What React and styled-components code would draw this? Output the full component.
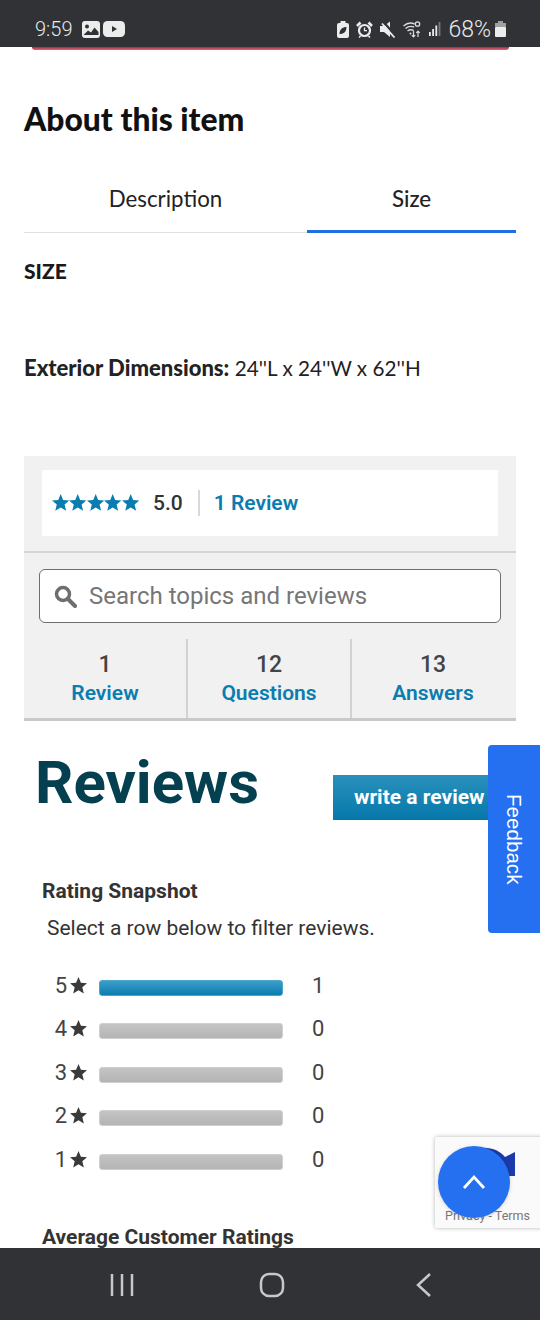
import styled, { createGlobalStyle } from 'styled-components';

const Global = createGlobalStyle`
  html, body {
    margin: 0;
    padding: 0;
    background: #fff;
  }
`;

const Phone = styled.div`
  position: relative;
  width: 540px;
  height: 1320px;
  overflow: hidden;
  display: flex;
  flex-direction: column;
  font-family: Roboto, "Liberation Sans", sans-serif;
  color: #333;
`;

const StatusBar = styled.div`
  height: 47px;
  flex: none;
  background: #303236;
  color: #e8e8e8;
  display: flex;
  align-items: center;
  justify-content: space-between;
  padding: 11px 34px 0 35px;
  box-sizing: border-box;
  font-size: 20px;
  font-weight: 300;
`;

const StatusGroup = styled.div`
  display: flex;
  align-items: center;
  gap: ${(p) => p.$gap || 6}px;
`;

const Percent = styled.span`
  font-size: 23px;
`;

const Main = styled.div`
  flex: 1;
  min-height: 0;
  overflow: hidden;
  background: #fff;
`;

const RedBar = styled.div`
  height: 3px;
  margin: 0 31px 0 32px;
  background: linear-gradient(#a82a3e, #dc6a7e);
  border-radius: 0 0 4px 4px;
`;

const Section = styled.div`
  padding: 0 24px;
`;

const Title = styled.h2`
  margin: 50px 0 0;
  font-family: Lato, sans-serif;
  font-weight: 900;
  font-size: 31.8px;
  line-height: 38px;
  color: #111;
`;

const Tabs = styled.div`
  display: grid;
  grid-template-columns: 283px 209px;
  margin-top: 42px;
  border-bottom: 1px solid #e0e0e0;
`;

const Tab = styled.div`
  height: 53px;
  box-sizing: border-box;
  padding-bottom: 14px;
  display: flex;
  align-items: center;
  justify-content: center;
  font-family: Lato, sans-serif;
  font-size: 22.3px;
  font-weight: ${(p) => (p.$active ? 500 : 400)};
  color: #222;
  margin-bottom: -1px;
  border-bottom: 3px solid ${(p) => (p.$active ? '#1f6fe0' : 'transparent')};
`;

const SizeLabel = styled.div`
  margin-top: 26px;
  font-family: Lato, sans-serif;
  font-weight: 900;
  font-size: 21px;
  line-height: 24px;
  color: #1a1a1a;
`;

const Dimensions = styled.div`
  margin-top: 73px;
  font-family: Lato, sans-serif;
  font-size: 20.7px;
  line-height: 24px;
  color: #222;

  b {
    font-size: 22px;
    font-weight: 900;
  }
`;

const ReviewPanel = styled.div`
  margin: 76px 24px 0;
  background: #f1f1f1;
  border-bottom: 3px solid #c9c9c9;
`;

const SummaryWrap = styled.div`
  padding: 14px 18px 15px;
  border-bottom: 2px solid #d5d5d5;
`;

const Summary = styled.div`
  height: 66px;
  background: #fff;
  display: flex;
  align-items: center;
  padding-left: 10px;
`;

const Stars = styled.span`
  display: flex;
`;

const Score = styled.span`
  font-size: 21px;
  font-weight: 500;
  margin-left: 14px;
  color: #333;
`;

const Divider = styled.span`
  width: 2px;
  height: 26px;
  background: #d8d8d8;
  margin: 0 14px 0 15px;
`;

const SummaryLink = styled.span`
  font-size: 21px;
  font-weight: 600;
  color: #0a7db0;
`;

const SearchBox = styled.div`
  margin: 16px 15px 0;
  height: 54px;
  box-sizing: border-box;
  background: #fff;
  border: 1.5px solid #6e6e6e;
  border-radius: 6px;
  display: flex;
  align-items: center;
  gap: 12px;
  padding-left: 13px;
  font-size: 24px;
  color: #767676;
`;

const Counts = styled.div`
  display: grid;
  grid-template-columns: 162px 164px 164px;
  margin-top: 16px;
`;

const Count = styled.div`
  height: 79px;
  box-sizing: border-box;
  text-align: center;
  padding-top: 12px;
  border-left: ${(p) => (p.$first ? 'none' : '2px solid #d2d2d2')};
`;

const CountNumber = styled.div`
  font-size: 23px;
  font-weight: 500;
  line-height: 28px;
  color: #444;
`;

const CountLabel = styled.div`
  font-size: 21px;
  font-weight: 600;
  line-height: 28px;
  color: #0a7db0;
`;

const ReviewsHead = styled.div`
  display: flex;
  align-items: center;
  justify-content: space-between;
  margin: 25px 0 0 35px;
  height: 74px;
`;

const ReviewsTitle = styled.h1`
  margin: 0;
  font-size: 60px;
  font-weight: 700;
  line-height: 74px;
  color: #04404f;
`;

const WriteButton = styled.div`
  width: 207px;
  height: 45px;
  display: flex;
  align-items: center;
  padding-left: 21px;
  box-sizing: border-box;
  margin-top: 28px;
  font-size: 21px;
  font-weight: 700;
  color: #fff;
  background: linear-gradient(#2a90bb, #0578ab);
`;

const Snapshot = styled.div`
  padding: 0 0 0 42px;
  margin-top: 58px;
`;

const SubHead = styled.div`
  font-size: 21px;
  font-weight: 700;
  line-height: 26px;
  color: #333;
  margin-top: ${(p) => p.$top || 0}px;
`;

const Hint = styled.div`
  margin: 11px 0 0 5px;
  font-size: 21px;
  line-height: 26px;
  color: #333;
`;

const Bars = styled.div`
  margin-top: 29px;
  display: flex;
  flex-direction: column;
  gap: 13.6px;
`;

const BarRow = styled.div`
  display: flex;
  align-items: center;
  height: 30px;
  font-size: 22px;
  color: #444;
`;

const BarStar = styled.div`
  width: 45px;
  display: flex;
  align-items: center;
  justify-content: flex-end;
  gap: 3px;
`;

const Bar = styled.div`
  width: 184px;
  height: 16px;
  box-sizing: border-box;
  margin: 5px 0 0 12px;
  border-radius: 3px;
  border: 1px solid ${(p) => (p.$filled ? '#4ba5cc' : '#cfcfcf')};
  background: ${(p) =>
    p.$filled
      ? 'linear-gradient(#3d9ec9, #0a7db0)'
      : 'linear-gradient(#c4c4c4, #b4b4b4)'};
`;

const BarCount = styled.div`
  margin-left: 29px;
`;

const NavBar = styled.div`
  height: 72px;
  flex: none;
  box-sizing: border-box;
  padding-top: 2px;
  background: #303236;
  display: grid;
  grid-template-columns: 243px 57px 240px;
  align-items: center;
  color: #c8c8c8;
`;

const NavItem = styled.div`
  display: flex;
  justify-content: ${(p) => p.$justify || 'center'};
  padding: ${(p) => p.$pad || '0'};
`;

const Feedback = styled.div`
  position: absolute;
  right: 0;
  top: 745px;
  width: 52px;
  height: 188px;
  border-radius: 4px 0 0 4px;
  background: #2470f0;
  color: #fff;
  display: flex;
  align-items: center;
  justify-content: center;
  font-family: "Liberation Sans", sans-serif;
  font-size: 20.6px;
`;

const FeedbackText = styled.span`
  writing-mode: vertical-rl;
`;

const Recaptcha = styled.div`
  position: absolute;
  left: 435px;
  top: 1137px;
  width: 110px;
  height: 91px;
  background: #fafafa;
  border-radius: 2px;
  box-shadow: 0 0 4px rgba(0, 0, 0, 0.3);
  overflow: hidden;
`;

const RecaptchaLinks = styled.div`
  position: absolute;
  left: 10px;
  bottom: 5px;
  font-size: 12.5px;
  white-space: nowrap;
  color: #777;
`;

const RecaptchaMark = styled.svg`
  position: absolute;
  left: 45px;
  top: 10px;
`;

const TopButton = styled.div`
  position: absolute;
  left: 438px;
  top: 1146px;
  width: 72px;
  height: 72px;
  border-radius: 50%;
  background: #2470f0;
  box-shadow: 0 1px 4px rgba(0, 0, 0, 0.15);
  display: flex;
  align-items: center;
  justify-content: center;
`;

const StarIcon = ({ size = 17.4, color = '#0a7db0' }) => (
  <svg width={size} height={size} viewBox="0 0 24 24" fill={color}>
    <path d="M12 0l3.4 8.200 8.600.700-6.600 5.700 2.100 8.600L12 18.600l-7.500 4.600 2.100-8.600L0 8.900l8.600-.700z" />
  </svg>
);

const rows = [
  { stars: 5, count: 1 },
  { stars: 4, count: 0 },
  { stars: 3, count: 0 },
  { stars: 2, count: 0 },
  { stars: 1, count: 0 },
];

function App() {
  return (
    <Phone>
      <Global />
      <StatusBar>
        <StatusGroup $gap={10}>
          <span>9:59</span>
          <StatusGroup $gap={3}>
            <svg width="18" height="17" viewBox="0 0 18 17">
              <rect width="18" height="17" rx="3" fill="#ececec" />
              <circle cx="5" cy="5.500" r="2" fill="#303236" />
              <path d="M1.500 14l4.500-4.500 3 2 3.500-5L16.500 11v3z" fill="#303236" />
            </svg>
            <svg width="22" height="16" viewBox="0 0 22 16">
              <rect width="22" height="16" rx="4.500" fill="#ececec" />
              <path d="M9 5l5 3-5 3z" fill="#303236" />
            </svg>
          </StatusGroup>
        </StatusGroup>
        <StatusGroup $gap={7}>
          <svg width="12" height="17" viewBox="0 0 12 17">
            <rect x="3.500" width="5" height="2" fill="#ececec" />
            <rect y="2" width="12" height="15" rx="2" fill="#ececec" />
            <path d="M2.500 13c0-4.500 3-7 7-7 0 4.500-2.500 7-7 7z" fill="#303236" />
          </svg>
          <svg width="17" height="17" viewBox="0 0 17 17" fill="none" stroke="#ececec">
            <circle cx="8.500" cy="9.500" r="5.500" strokeWidth="2.200" />
            <path d="M8.500 6.500v3.200h2.500" strokeWidth="1.300" />
            <path d="M1 5l3.500-3.500M16 5l-3.500-3.500" strokeWidth="2.600" />
            <path d="M4.500 15l-1.500 1.500M12.500 15l1.500 1.500" strokeWidth="1.500" />
          </svg>
          <svg width="16" height="17" viewBox="0 0 16 17">
            <path d="M0 5h4l6-4.500V16L4 11H0z" fill="#ececec" />
            <path d="M4 1.500l12 14" stroke="#303236" strokeWidth="2.400" />
            <path d="M2 2.500l12.500 14" stroke="#ececec" strokeWidth="1.800" />
          </svg>
          <svg width="19" height="18" viewBox="0 0 19 18" fill="none" stroke="#dcdcdc" strokeWidth="1.400">
            <path d="M0.500 6c4-3.500 8-3.500 11-2M2.500 8.500c3-2.500 6-2.500 8.500-1.500M4.500 11c2-1.500 4-1.500 6-.700" />
            <circle cx="7.500" cy="13.500" r="1" fill="#dcdcdc" stroke="none" />
            <path d="M10.500 10.500v6.500M8.800 15.200l1.700 1.800 1.700-1.800M15 17v-6M13.300 12.800l1.700-1.800 1.700 1.800" strokeWidth="1.200" />
            <circle cx="14.500" cy="4" r="2.200" strokeWidth="1.300" />
          </svg>
          <svg width="12" height="14" viewBox="0 0 12 14" fill="#ececec">
            <rect x="0" y="10" width="1.800" height="4" />
            <rect x="3.200" y="7" width="1.800" height="7" />
            <rect x="6.400" y="3.500" width="1.800" height="10.500" />
            <rect x="9.600" y="0" width="1.800" height="14" fill="#777" />
          </svg>
          <StatusGroup $gap={4}>
            <Percent>68%</Percent>
            <svg width="11" height="16" viewBox="0 0 11 16" fill="#ececec">
              <rect x="3" width="5" height="2" fill="#a0a0a0" />
              <rect y="2" width="11" height="4" fill="#a0a0a0" />
              <rect y="6" width="11" height="10" rx="1" />
            </svg>
          </StatusGroup>
        </StatusGroup>
      </StatusBar>

      <Main>
        <RedBar />
        <Section>
          <Title>About this item</Title>
          <Tabs>
            <Tab>Description</Tab>
            <Tab $active>Size</Tab>
          </Tabs>
          <SizeLabel>SIZE</SizeLabel>
          <Dimensions>
            <b>Exterior Dimensions:</b> 24&apos;&apos;L x 24&apos;&apos;W x 62&apos;&apos;H
          </Dimensions>
        </Section>

        <ReviewPanel>
          <SummaryWrap>
            <Summary>
              <Stars>
                {[1, 2, 3, 4, 5].map((n) => (
                  <StarIcon key={n} />
                ))}
              </Stars>
              <Score>5.0</Score>
              <Divider />
              <SummaryLink>1 Review</SummaryLink>
            </Summary>
          </SummaryWrap>
          <SearchBox>
            <svg width="24" height="24" viewBox="0 0 24 24" fill="none" stroke="#6e6e6e">
              <circle cx="10" cy="10" r="6.500" strokeWidth="3.500" />
              <path d="M15 15l7 7" strokeWidth="4" strokeLinecap="round" />
            </svg>
            Search topics and reviews
          </SearchBox>
          <Counts>
            <Count $first>
              <CountNumber>1</CountNumber>
              <CountLabel>Review</CountLabel>
            </Count>
            <Count>
              <CountNumber>12</CountNumber>
              <CountLabel>Questions</CountLabel>
            </Count>
            <Count>
              <CountNumber>13</CountNumber>
              <CountLabel>Answers</CountLabel>
            </Count>
          </Counts>
        </ReviewPanel>

        <ReviewsHead>
          <ReviewsTitle>Reviews</ReviewsTitle>
          <WriteButton>write a review</WriteButton>
        </ReviewsHead>

        <Snapshot>
          <SubHead>Rating Snapshot</SubHead>
          <Hint>Select a row below to filter reviews.</Hint>
          <Bars>
            {rows.map((row) => (
              <BarRow key={row.stars}>
                <BarStar>
                  {row.stars}
                  <StarIcon size={17} color="#3a3a3a" />
                </BarStar>
                <Bar $filled={row.count > 0} />
                <BarCount>{row.count}</BarCount>
              </BarRow>
            ))}
          </Bars>
          <SubHead $top={50}>Average Customer Ratings</SubHead>
        </Snapshot>
      </Main>

      <NavBar>
        <NavItem $justify="flex-end" $pad="0 108px 0 0">
          <svg width="26" height="24" viewBox="0 0 26 24" stroke="#c8c8c8" strokeWidth="2.500">
            <path d="M3 1v22M13 1v22M23 1v22" />
          </svg>
        </NavItem>
        <NavItem>
          <svg width="26" height="26" viewBox="0 0 26 26" fill="none" stroke="#c8c8c8" strokeWidth="2.500">
            <rect x="2" y="2" width="22" height="22" rx="8" />
          </svg>
        </NavItem>
        <NavItem $justify="flex-start" $pad="0 0 0 116px">
          <svg width="16" height="26" viewBox="0 0 16 26" fill="none" stroke="#c8c8c8" strokeWidth="2.500">
            <path d="M14 2L2 13l12 11" />
          </svg>
        </NavItem>
      </NavBar>

      <Feedback>
        <FeedbackText>Feedback</FeedbackText>
      </Feedback>

      <Recaptcha>
        <RecaptchaMark width="36" height="30" viewBox="0 0 36 30">
          <path d="M0 1c12-1 20 3 25 9l10-5v24H16l5-6C15 18 8 12 0 10z" fill="#1c3aa9" />
        </RecaptchaMark>
        <RecaptchaLinks>Privacy - Terms</RecaptchaLinks>
      </Recaptcha>
      <TopButton>
        <svg width="24" height="16" viewBox="0 0 24 16" fill="none" stroke="#fff" strokeWidth="2.800">
          <path d="M2 14L12 3l10 11" />
        </svg>
      </TopButton>
    </Phone>
  );
}

export default App;
